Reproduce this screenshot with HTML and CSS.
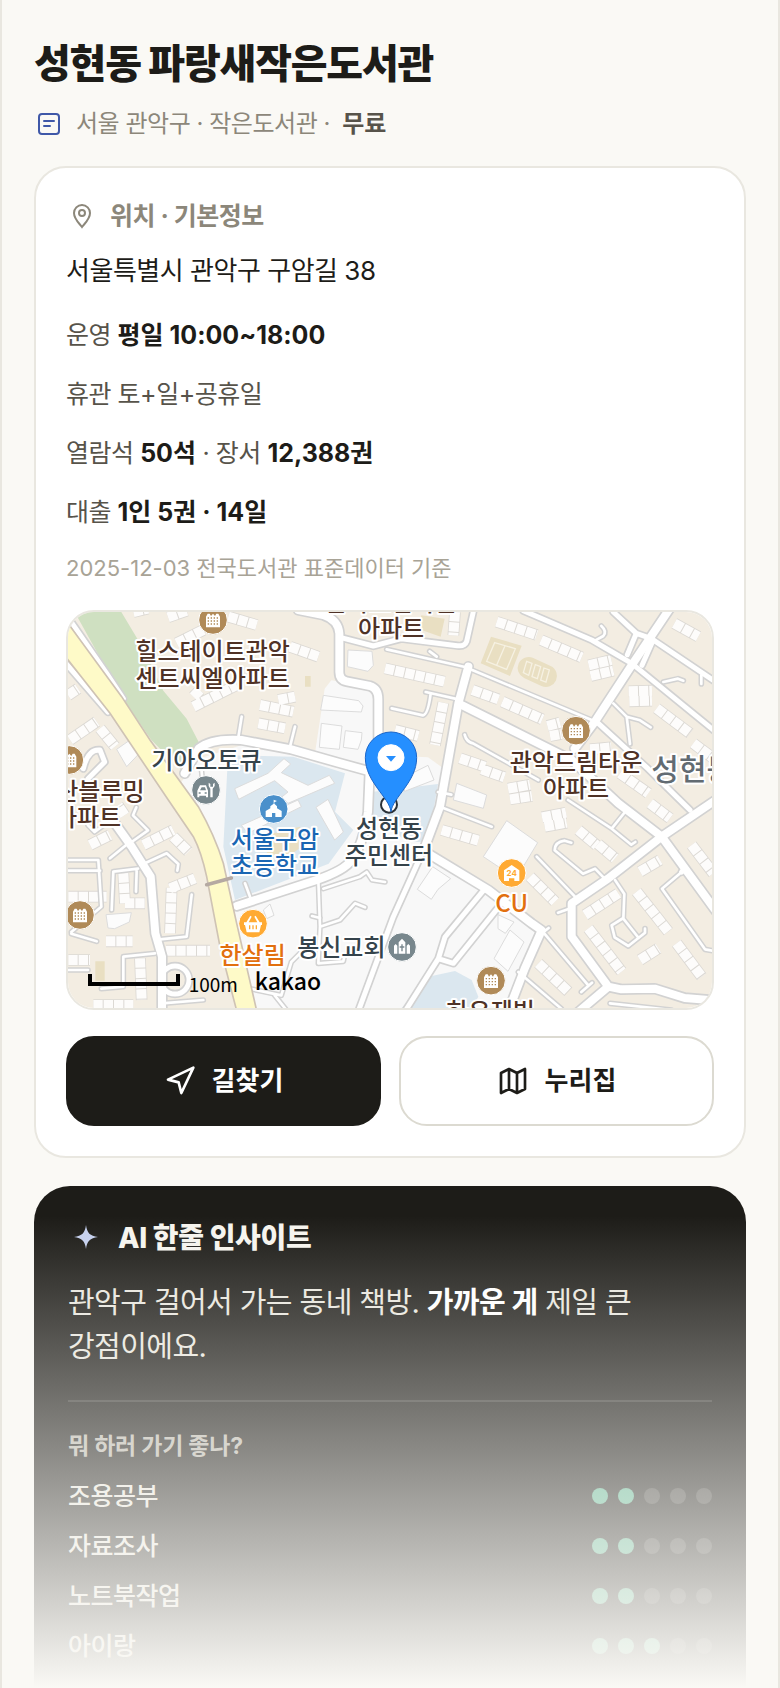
FILE: index.html
```html
<!DOCTYPE html>
<html lang="ko">
<head>
    <meta charset="UTF-8">
    <meta name="viewport" content="width=device-width, initial-scale=1.0">
    <title>성현동 파랑새작은도서관</title>
    <link rel="stylesheet" href="styles.css">
</head>
<body>
    <main class="page">
        <header>
            <h1>성현동 파랑새작은도서관</h1>
            <p class="meta">
                <svg class="meta-icon" viewBox="0 0 30 30" aria-hidden="true">
                    <rect x="5" y="5" width="20" height="20" rx="3"/>
                    <path d="M10 12h10M10 17h6"/>
                </svg>
                <span>서울 관악구 · 작은도서관 · <b>무료</b></span>
            </p>
        </header>

        <section class="card">
            <h2 class="card-title">
                <svg viewBox="0 0 32 32" aria-hidden="true">
                    <path d="M16 27c-3-4-8-8-8-14a8 8 0 0 1 16 0c0 6-5 10-8 14z"/>
                    <circle cx="16" cy="13" r="3"/>
                </svg>
                위치 · 기본정보
            </h2>
            <p class="address">서울특별시 관악구 구암길 38</p>
            <ul class="info">
                <li>운영 <b>평일 10:00~18:00</b></li>
                <li>휴관 토+일+공휴일</li>
                <li>열람석 <b>50석</b> · 장서 <b>12,388권</b></li>
                <li>대출 <b>1인 5권 · 14일</b></li>
            </ul>
            <p class="source">2025-12-03 전국도서관 표준데이터 기준</p>

            <div class="map">
                <svg viewBox="0 0 1932 1188" preserveAspectRatio="xMidYMid slice" role="img" aria-label="지도">
                    <defs>
                        <!-- roads by width, drawn twice: casing first, then fill -->
                        <g id="road-l">
                            <path d="M691-6L766 9Q811 24 814 64V180Q814 204 836 208L906 222Q931 230 931 262V400L905 478L900 600Q885 700 850 745Q830 775 746 804L506 882"/>
                            <path d="M350 484L392 410Q430 378 520 384L670 412L810 452L905 478"/>
                            <path d="M1201 164L1171 274L1116 584L1071 704"/>
                            <path d="M1805-10L1691 160L1580 330L1520 410"/>
                            <path d="M1175 276L1391 384L1511 444L1651 574L1781 674L1946 900"/>
                            <path d="M1946 562L1781 674L1621 799L1511 874V974L1621 1124L1660 1132L1760 1130L1850 1158L1946 1166M1621 1124L1531 1200"/>
                            <path d="M1071 719L1261 834L1391 934L1421 955L1370 1070L1320 1200"/>
                            <path d="M141 634L191 704L248 794L262 964L282 1034V1200"/>
                        </g>
                        <g id="road-m">
                            <path d="M1218-10L1196 88Q1190 104 1168 101L1000 80L916 102L816 76"/>
                            <path d="M1071 704L976 914L870 1200"/>
                            <path d="M1366-4L1571 84L1691 154L1946 362"/>
                            <path d="M1636 0L1705 64L1750 80L1946 212M1705 64L1678 128M1752 92L1722 160"/>
                            <path d="M1246 836L1131 975L1111 1040L1010 1200M1111 1040L1156 1054L1296 880"/>
                            <path d="M1841 780L1850 768M1866 594L1740 470L1591 334"/>
                            <path d="M-4 10L116 184L166 260M-10 150L120 300"/>
                            <circle cx="321" cy="1104" r="42"/>
                            <path d="M46 470Q60 410 96 414L110 450L60 500"/>
                        </g>
                        <g id="road-s">
                            <path d="M956 112L1191 165L1571 324M1085 118L1106 134"/>
                            <path d="M1073 240L1171 262M971 289L1065 310Q1080 308 1088 245"/>
                            <path d="M1190 368Q1195 390 1215 394L1411 504"/>
                            <path d="M1636 274L1676 314L1716 325L1748 346M1676 314L1686 396"/>
                            <path d="M1786 210L1830 200L1846 206M1600 42Q1618 58 1606 72L1581 86M1900 190V216"/>
                            <path d="M1421 955L1561 1120M1351 1080L1480 1190M1540 1140L1572 1112"/>
                            <path d="M1521 854L1406 734M1470 902L1510 888M1420 965L1442 948"/>
                            <path d="M1610 800L1581 770L1545 785L1460 715Q1460 690 1490 686L1510 692"/>
                            <path d="M1641 804L1669 846L1666 920L1712 978M1666 918L1631 940L1640 976L1681 1002L1731 962V950"/>
                            <path d="M1841 780L1782 830L1911 1012L1946 1018"/>
                            <path d="M1500 564L1631 650L1690 698L1702 690M1671 600L1631 650"/>
                            <path d="M1116 584L1271 644M1110 540L1150 548M1626 1174L1810 1194"/>
                            <path d="M191 690L240 655L195 610L205 586M126 739L181 694M210 770L136 779L131 894M206 776L204 839"/>
                            <path d="M226 756L296 724L331 756L328 776M371 848L356 974L276 982"/>
                            <path d="M261 1024L166 1034V1124L100 1130M282 1174L406 1164"/>
                            <path d="M0 744H91L100 884L10 960M0 776H96M10 965L86 988M0 1074H60M60 640L80 660L120 630"/>
                            <path d="M751 804L756 944L816 924L861 874L891 886M756 944L751 1054L826 1048L830 1030M732 912L756 918"/>
                            <path d="M766 830L876 794L896 780L912 804L951 810M546 854L531 814"/>
                            <path d="M536 1128L640 1150L670 1050L700 1020M620 1150L660 1200"/>
                            <path d="M521 314L511 376M681 344L666 404M400 470L404 510"/>
                        </g>
                        <!-- rows of houses -->
                        <g id="houses">
                            <path d="M1286 29L1406 69M1419 84L1541 136M951 169L1129 209M1213 234L1291 262M1303 269L1423 322M1126 272L1101 399M1176 439L1251 464M1241 472L1309 496M1819 34L1891 74M1766 289L1866 364M1876 394L1936 439M1656 484L1741 544M981 354L1051 372M1161 0L1156 70"/>
                            <path d="M1562 160L1630 144M1568 192L1636 176M1682 238L1752 236M1684 268L1752 266M1438 342L1476 332M1446 372L1480 366M1320 530L1386 518M1326 562L1392 552M1566 412L1630 406M1422 616L1494 602M1430 644L1496 632"/>
                            <path d="M1121 654L1231 686M1531 654L1586 700M1590 696L1641 739M1386 794L1461 869M1551 909L1651 844M1706 839L1801 959M1561 949L1661 1079M1826 994L1901 1094M1411 1054L1501 1139M1716 1044L1771 1009M1716 779L1776 744M1871 699L1936 784M1746 574L1806 619"/>
                            <path d="M306 964L311 828M306 829L381 799M294 1016H426M114 988H194M166 784L171 874M171 874H231M66 699L126 669M226 699L316 654M316 674L361 719M216 1039L221 1164M76 1179H196M1 854H116M1 1044H66"/>
                            <path d="M6 384L86 329M96 349L141 404M376 284L506 219M576 279L676 299M631 264L681 254M666 104L751 134M481 14L566 39M326 94L406 54M571 334L651 349M376 254L396 234M196 0L240-10M0 250L30 230M300 16L356-4M170 610L150 580"/>
                        </g>
                        <g id="apt">
                            <circle r="43"/>
                            <path d="M-21 22V-10L-16-19H-10L-6-12L0-19L6-12L10-19H16L21-10V22Z"/>
                            <path class="windows" d="M-16-6H18M-16 3H18M-16 12H18"/>
                        </g>
                    </defs>

                    <rect class="land" width="1932" height="1188"/>
                    <path class="plain" d="M392 440L520 400L740 430L770 230L790 205L930 225L940 430L1080 436L1128 470L1080 720L1261 834L1421 955L1320 1190H560L500 900L466 754L400 600L340 510Z"/>
                    <path class="park" d="M20 0H160L226 110L286 236L356 320L392 390L346 480L250 384L161 254Z"/>
                    <path class="blue" d="M480 430L676 434L831 484L801 599L856 654L782 755L501 864L466 704Z"/>
                    <path class="blue" d="M910 540L1110 516L1080 690L1020 690L905 610Z"/>
                    <path class="blue" d="M1081 1094L1161 1077L1211 1104L1231 1154L1210 1190H1000Z"/>
                    <path class="court" d="M1269 74L1361 101L1326 192L1238 154ZM616 664L696 644L716 694L646 744L596 724ZM711 192H728V224H711ZM1060 10L1130 20L1118 74L1050 50ZM82 1048H110V1106H82Z"/>
                    <path class="court-oval" d="M1382 168L1434 192"/>
                    <path class="court-line" d="M1280 92L1342 110L1316 172L1256 148ZM1311 101L1286 160M1376 148L1392 154L1382 190L1366 182ZM1402 158L1418 164L1408 200L1392 194ZM1428 168L1444 174L1434 210L1418 204Z"/>

                    <use href="#houses" class="houses-edge"/>
                    <use href="#houses" class="houses-fill"/>
                    <path class="building" d="M766 250L872 266L885 282L880 300L758 294ZM760 334L822 342L814 412L754 406ZM832 356L882 362L880 384L870 412L826 406ZM840 114L912 118L916 160L900 178L838 164ZM1166 514L1256 549L1246 589L1156 564Z"/>
                    <path class="building" d="M1316 626L1409 692L1350 790L1300 770L1246 734ZM1094 764L1148 800L1110 832L1090 862L1048 832ZM1326 954L1368 990L1320 1078L1278 1040ZM1290 908L1338 930L1312 964L1290 950ZM146 412L186 384L214 424L176 464ZM114 908L190 902L184 930L140 950L120 948ZM586 894L606 876L618 910L596 920Z"/>
                    <path class="building" d="M500 530L600 484L648 440L668 456L640 482L720 520L784 490L800 514L660 574L640 556L660 540L620 506L512 562ZM520 640L690 564L700 584L540 664ZM744 586L780 562L826 660L800 684ZM1000 500L1080 460L1098 504L1010 538Z"/>

                    <use href="#road-l" class="case-l"/>
                    <use href="#road-m" class="case-m"/>
                    <use href="#road-s" class="case-s"/>
                    <use href="#road-s" class="fill-s"/>
                    <use href="#road-m" class="fill-m"/>
                    <use href="#road-l" class="fill-l"/>

                    <path class="highway" d="M-6 26L161 254L246 384L391 584Q440 670 466 754L506 934L566 1196H506L456 1004L416 794Q400 720 376 674L301 564L126 304L-6 136Z"/>
                    <path class="overpass" d="M416 818L490 798"/>

                    <g class="poi-apt">
                        <use href="#apt" x="435" y="24"/>
                        <use href="#apt" x="4" y="444"/>
                        <use href="#apt" x="1524" y="356"/>
                        <use href="#apt" x="36" y="909"/>
                        <use href="#apt" x="1269" y="1106"/>
                    </g>
                    <g class="poi-gray" transform="translate(414 534)">
                        <circle r="43"/>
                        <path d="M-26 22V2L-18-14H0L6 2V22H0V17H-20V22Z"/>
                        <path class="hole" d="M-18 1L-13-8H-3L0 1ZM-22 7H-16V11H-22ZM-4 7H2V11H-4Z"/>
                        <path d="M8-22V-12L13-4V22H20V-4L26-12V-22L21-18V-10H13V-18Z"/>
                    </g>
                    <g class="poi-gray" transform="translate(1002 1005)">
                        <circle r="43"/>
                        <path d="M-10 20V-14L0-25L10-14V20ZM-24 20V-4L-19-9L-14-4V20ZM14 20V-4L19-9L24-4V20Z"/>
                        <path class="hole" d="M-2-8H2V-2H7V2H2V13H-2V2H-7V-2H-2Z"/>
                    </g>
                    <g class="poi-school" transform="translate(617 591)">
                        <circle r="43"/>
                        <path d="M-24 24V6L-10-2V-8L0-16V-28L10-24L2-20V-16L10-8V-2L24 6V24H5V12H-5V24Z"/>
                    </g>
                    <g class="poi-shop" transform="translate(1331 783)">
                        <circle r="43"/>
                        <path d="M-23 24V-8L0-24L23-8V24H8V16H-8V24Z"/>
                        <text class="shop-24" y="9">24</text>
                    </g>
                    <g class="poi-shop" transform="translate(555 935)">
                        <circle r="43"/>
                        <path d="M-27-4H-20L-8-24L-4-21L-13-4H13L4-21L8-24L20-4H27V4H24L19 26H-19L-24 4H-27Z"/>
                        <path class="hole" d="M-12 5H-8V17H-12ZM-2 5H2V17H-2ZM8 5H12V17H8Z"/>
                    </g>

                    <g class="label brown">
                        <text x="434" y="145">힐스테이트관악</text>
                        <text x="434" y="224">센트씨엘아파트</text>
                        <text x="969" y="-4">관악드림타운</text>
                        <text x="969" y="75">아파트</text>
                        <text x="64" y="564">벽산블루밍</text>
                        <text x="60" y="642">아파트</text>
                        <text x="1524" y="476">관악드림타운</text>
                        <text x="1524" y="556">아파트</text>
                        <text x="1268" y="1224">하우제빌</text>
                    </g>
                    <g class="label slate">
                        <text x="415" y="470">기아오토큐</text>
                        <text x="820" y="1032">봉신교회</text>
                    </g>
                    <g class="label blue-text">
                        <text x="621" y="708">서울구암</text>
                        <text x="621" y="787">초등학교</text>
                    </g>
                    <g class="label orange">
                        <text x="1331" y="899">CU</text>
                        <text x="554" y="1055">한살림</text>
                    </g>
                    <text class="district" x="1750" y="504">성현동</text>

                    <circle class="spot" cx="963" cy="578" r="24"/>
                    <g class="label slate">
                        <text x="963" y="676">성현동</text>
                        <text x="963" y="756">주민센터</text>
                    </g>
                    <path class="pin" d="M969 599C964 556 892 510 892 437A77 77 0 0 1 1046 437C1046 510 974 556 969 599Z"/>
                    <circle class="pin-hole" cx="969" cy="437" r="39"/>
                    <path class="pin-mark" d="M954 432H984L969 449Z"/>

                    <path class="scale" d="M66 1086V1116H330V1086"/>
                    <text class="scale-text" x="362" y="1140">100m</text>
                    <text class="brand" x="560" y="1134">kakao</text>
                </svg>
            </div>

            <div class="actions">
                <button type="button" class="btn btn-dark">
                    <svg viewBox="0 0 24 24" aria-hidden="true"><path d="M3 11L22 2L13 21L11 13Z"/></svg>
                    길찾기
                </button>
                <button type="button" class="btn">
                    <svg viewBox="0 0 24 24" aria-hidden="true"><path d="M3 6L9 3L15 6L21 3V18L15 21L9 18L3 21ZM9 3V18M15 6V21"/></svg>
                    누리집
                </button>
            </div>
        </section>

        <section class="insight">
            <h2>
                <svg viewBox="0 0 36 36" aria-hidden="true"><path d="M18 5C19 13 22 16 30 17C22 18 19 21 18 29C17 21 14 18 6 17C14 16 17 13 18 5Z"/></svg>
                AI 한줄 인사이트
            </h2>
            <p class="insight-text">관악구 걸어서 가는 동네 책방. <b>가까운 게</b> 제일 큰 강점이에요.</p>
            <h3>뭐 하러 가기 좋나?</h3>
            <ul class="scores">
                <li>조용공부 <span class="dots"><i class="on"></i><i class="on"></i><i></i><i></i><i></i></span></li>
                <li>자료조사 <span class="dots"><i class="on"></i><i class="on"></i><i></i><i></i><i></i></span></li>
                <li>노트북작업 <span class="dots"><i class="on"></i><i class="on"></i><i></i><i></i><i></i></span></li>
                <li>아이랑 <span class="dots"><i class="on"></i><i class="on"></i><i class="on"></i><i></i><i></i></span></li>
            </ul>
        </section>
        <div class="fade"></div>
    </main>
</body>
</html>
```

FILE: styles.css
```css
* {
    box-sizing: border-box;
}
body {
    margin: 0;
    background: #faf9f5;
    color: #1d1c18;
    font-family: Inter, "Noto Sans CJK KR", sans-serif;
    font-size: 24px;
    letter-spacing: -0.02em;
    word-break: keep-all;
}
h1, h2, h3, p, ul {
    margin: 0;
    padding: 0;
}
ul {
    list-style: none;
}
.page {
    position: relative;
    display: flex;
    flex-direction: column;
    min-height: 100vh;
    padding: 34px 32px 0;
    border: solid #e9e7e0;
    border-width: 0 2px;
    overflow: hidden;
}

h1 {
    font-size: 40px;
    line-height: 60px;
    font-weight: 800;
    letter-spacing: -0.03em;
}
.meta {
    display: flex;
    align-items: center;
    gap: 12px;
    margin: 11px 0 23px;
    line-height: 38px;
    color: #8c877a;
}
.meta b {
    margin-left: 6px;
    font-weight: 600;
    letter-spacing: normal;
    color: #57534a;
}
.meta-icon {
    width: 30px;
    height: 30px;
    fill: none;
    stroke: #3f58a8;
    stroke-width: 2;
    stroke-linecap: round;
}

.card {
    padding: 30px;
    background: #fff;
    border: 2px solid #e9e7e0;
    border-radius: 32px;
}
.card-title {
    display: flex;
    align-items: center;
    gap: 12px;
    font-size: 25px;
    line-height: 36px;
    font-weight: 700;
    color: #8c877a;
}
.card-title svg {
    width: 32px;
    height: 32px;
    fill: none;
    stroke: currentColor;
    stroke-width: 2;
}
.address {
    margin-top: 17px;
    font-size: 26px;
    line-height: 40px;
}
.info {
    display: grid;
    gap: 19px;
    margin-top: 24px;
    font-size: 25px;
    line-height: 40px;
    color: #57534a;
}
.info b {
    font-weight: 700;
    letter-spacing: normal;
    color: #1d1c18;
}
.source {
    margin-top: 18px;
    font-size: 22px;
    line-height: 36px;
    letter-spacing: normal;
    color: #a8a396;
}

/* map */
.map {
    height: 400px;
    margin-top: 24px;
    overflow: hidden;
    border: 2px solid #e9e7e0;
    border-radius: 28px;
    letter-spacing: normal;
}
.map svg {
    display: block;
    width: 100%;
    height: 100%;
}
.land { fill: #f3ede2; }
.plain { fill: #f8f8f8; }
.park { fill: #cfe0c1; }
.blue { fill: #dbe7ef; }
.court { fill: #e9dfc2; }
.court-oval {
    stroke: #e9dfc2;
    stroke-width: 66;
    stroke-linecap: round;
}
.court-line {
    fill: none;
    stroke: #f6f1e2;
    stroke-width: 4;
}
.houses-edge {
    fill: none;
    stroke: #dcd9d4;
    stroke-width: 35;
}
.houses-fill {
    fill: none;
    stroke: #fdfcfb;
    stroke-width: 30;
    stroke-dasharray: 28 3;
}
.building {
    fill: #fcfcfc;
    stroke: #dcdcdc;
    stroke-width: 3;
}
.case-l, .case-m, .case-s {
    fill: none;
    stroke: #d2d2d2;
    stroke-linejoin: round;
    stroke-linecap: round;
}
.fill-l, .fill-m, .fill-s {
    fill: none;
    stroke: #fff;
    stroke-linejoin: round;
    stroke-linecap: round;
}
.case-l { stroke-width: 34; }
.case-m { stroke-width: 25; }
.case-s { stroke-width: 17; }
.fill-l { stroke-width: 24; }
.fill-m { stroke-width: 15; }
.fill-s { stroke-width: 8; }
.highway {
    fill: #fefac8;
    stroke: #cfc3b4;
    stroke-width: 5;
}
.overpass {
    stroke: #b5a9a2;
    stroke-width: 11;
    stroke-linecap: round;
}
.map circle {
    stroke: #fff;
    stroke-width: 3;
}
.map defs circle:not([r="43"]) {
    stroke: inherit;
    stroke-width: inherit;
}
.poi-apt { fill: #b08a58; }
.poi-gray { fill: #78878d; }
.poi-school { fill: #4a90cb; }
.poi-shop { fill: #ffaa33; }
#apt path, .poi-gray path, .poi-school path, .poi-shop path {
    fill: #fff;
}
#apt .windows {
    fill: none;
    stroke: #b08a58;
    stroke-width: 4;
    stroke-dasharray: 4 5;
}
.poi-gray .hole { fill: #78878d; }
.poi-shop .hole { fill: #ffaa33; }
.shop-24 {
    font-size: 24px;
    font-weight: 700;
    text-anchor: middle;
}
.label, .district {
    font-family: "Noto Sans CJK KR", sans-serif;
    font-size: 72px;
    font-weight: 500;
    text-anchor: middle;
    stroke: #fff;
    stroke-width: 12;
    stroke-linejoin: round;
    paint-order: stroke;
}
.brown { fill: #4f3226; }
.slate { fill: #35434b; }
.blue-text { fill: #1a66b3; }
.orange { fill: #e2700f; }
.district {
    font-size: 90px;
    text-anchor: start;
    fill: #626b72;
}
.map .spot {
    fill: #fff;
    stroke: #2b3238;
    stroke-width: 6;
}
.pin {
    fill: #258fff;
    stroke: #1b66c9;
    stroke-width: 3;
}
.map .pin-hole { fill: #fff; }
.pin-mark { fill: #258fff; }
.scale {
    fill: none;
    stroke: #000;
    stroke-width: 12;
}
.scale-text {
    font-family: "Noto Sans CJK KR", sans-serif;
    font-size: 57px;
}
.brand {
    font-family: "Noto Sans CJK KR", sans-serif;
    font-size: 69px;
    font-weight: 500;
}

.actions {
    display: grid;
    grid-template-columns: 1fr 1fr;
    gap: 18px;
    margin-top: 26px;
}
.btn {
    display: flex;
    align-items: center;
    justify-content: center;
    gap: 16px;
    height: 90px;
    padding: 0;
    background: #fff;
    border: 2px solid #dcdad1;
    border-radius: 28px;
    color: #1d1c18;
    font: inherit;
    font-size: 26px;
    font-weight: 700;
    line-height: 32px;
}
.btn svg {
    width: 32px;
    height: 32px;
    fill: none;
    stroke: currentColor;
    stroke-width: 2;
    stroke-linejoin: round;
}
.btn-dark {
    background: #1d1c18;
    border-color: #1d1c18;
    color: #fff;
}

/* insight card, fades out towards the bottom */
.insight {
    flex: 1;
    margin-top: 28px;
    padding: 32px 34px 0;
    background: #1d1c18;
    border-radius: 36px 36px 0 0;
    color: #e8e6de;
}
.insight h2 {
    display: flex;
    align-items: center;
    gap: 14px;
    font-size: 28px;
    line-height: 40px;
    font-weight: 800;
    letter-spacing: -0.01em;
    color: #f6f4ee;
}
.insight h2 svg {
    width: 36px;
    height: 36px;
    fill: #c5d0ee;
}
.insight-text {
    margin-top: 23px;
    padding-bottom: 31px;
    border-bottom: 2px solid #3a3935;
    font-size: 29px;
    line-height: 44px;
    letter-spacing: -0.02em;
}
.insight-text b {
    color: #fff;
}
.insight h3 {
    margin-top: 28px;
    font-size: 23px;
    line-height: 32px;
    font-weight: 700;
    letter-spacing: -0.01em;
    color: #b8b5ab;
}
.scores {
    margin-top: 9px;
}
.scores li {
    display: flex;
    align-items: center;
    justify-content: space-between;
    height: 50px;
    font-size: 25px;
    line-height: 32px;
    font-weight: 500;
}
.dots {
    display: flex;
    gap: 10px;
}
.dots i {
    width: 16px;
    height: 16px;
    border-radius: 50%;
    background: #41403c;
}
.dots .on {
    background: #5bb38f;
}
.fade {
    position: absolute;
    right: -2px;
    bottom: 0;
    left: -2px;
    height: 472px;
    background: linear-gradient(rgba(250, 249, 245, 0), #faf9f5);
    pointer-events: none;
}
```
